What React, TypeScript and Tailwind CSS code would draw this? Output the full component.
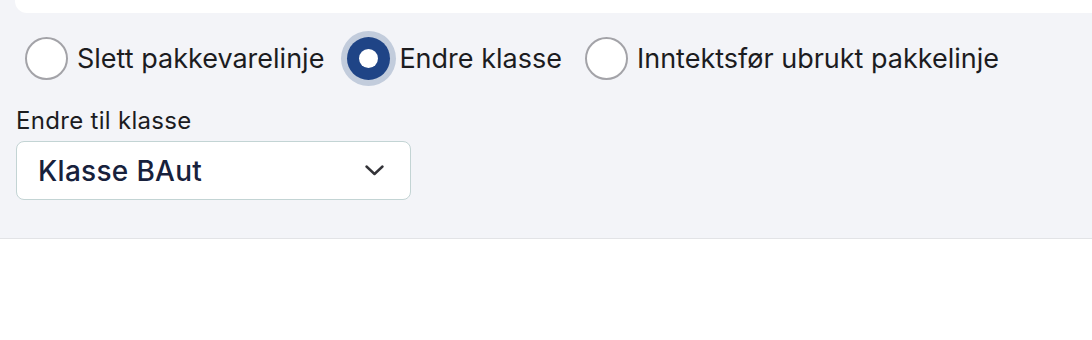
import { useState } from "react";

const OPTIONS = [
  { id: "slett", label: "Slett pakkevarelinje" },
  { id: "endre", label: "Endre klasse" },
  { id: "inntekt", label: "Inntektsfør ubrukt pakkelinje" },
];

function Radio({ checked }: { checked: boolean }) {
  if (checked) {
    return (
      <span className="flex h-[43px] w-[43px] shrink-0 items-center justify-center rounded-full bg-[#1f4486] ring-[6px] ring-[#c2ccdc]">
        <span className="h-[19px] w-[19px] rounded-full bg-white" />
      </span>
    );
  }
  return <span className="h-[43px] w-[43px] shrink-0 rounded-full border-2 border-[#a3a3a8] bg-white" />;
}

export default function App() {
  const [selected, setSelected] = useState("endre");

  return (
    <div className="h-[340px] w-[1092px] bg-white font-['Inter',sans-serif]">
      <div className="border-b border-[#e2e3e6] bg-[#f3f4f8] pb-[38px]">
        <div className="ml-[15px] h-[13px] rounded-bl-[12px] bg-white" />
        <div className="flex items-center pl-[25px] pt-[24px]">
          {OPTIONS.map((o) => (
            <label
              key={o.id}
              className="mr-[23px] flex cursor-pointer items-center gap-[9px]"
              onClick={() => setSelected(o.id)}
            >
              <Radio checked={selected === o.id} />
              <span className="text-[27px] leading-[42px] text-[#1c1c1f]">{o.label}</span>
            </label>
          ))}
        </div>
        <div className="px-[16px] pt-[25px]">
          <p className="text-[24px] leading-[32px] tracking-[0.3px] text-[#1c1c1f]">Endre til klasse</p>
          <div className="mt-[4px] flex h-[59px] w-[395px] items-center justify-between rounded-[8px] border border-[#c3d4d4] bg-white pl-[21px] pr-[26px]">
            <span className="text-[28px] font-medium tracking-[0.3px] text-[#17213c]">Klasse BAut</span>
            <svg width="19" height="11" viewBox="0 0 19 11" fill="none">
              <path d="M1.5 1.5L9.5 9L17.5 1.5" stroke="#333338" strokeWidth="2.4" strokeLinecap="round" strokeLinejoin="round" />
            </svg>
          </div>
        </div>
      </div>
    </div>
  );
}
